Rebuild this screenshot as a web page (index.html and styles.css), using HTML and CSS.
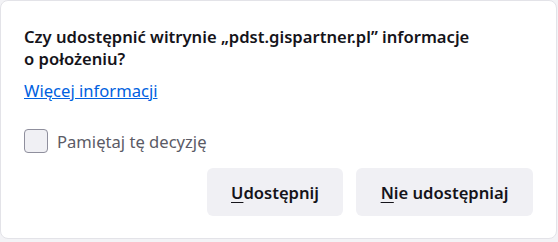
FILE: index.html
```html
<!DOCTYPE html>
<html lang="pl">
<head>
<meta charset="utf-8">
<link rel="stylesheet" href="styles.css">
</head>
<body>
<div class="panel">
  <div class="message">Czy udostępnić witrynie „pdst.gispartner.pl” informacje<br>o położeniu?</div>
  <a class="learn" href="#">Więcej informacji</a>
  <label class="remember"><span class="box"></span><span class="remember-text">Pamiętaj tę decyzję</span></label>
  <div class="actions">
    <button class="btn btn-allow"><u>U</u>dostępnij</button>
    <button class="btn btn-deny"><u>N</u>ie udostępniaj</button>
  </div>
</div>
</body>
</html>
```
FILE: styles.css
```css
html, body {
  margin: 0;
  padding: 0;
}
body {
  width: 558px;
  height: 242px;
  background: #f3f3f6;
  font-family: "Noto Sans", "Open Sans", sans-serif;
  color: #15141a;
  overflow: hidden;
}
.panel {
  box-sizing: border-box;
  width: 557px;
  height: 239px;
  background: #ffffff;
  border: 1px solid #e3e3e8;
  border-radius: 8px;
  padding: 25px 23px 0 23px;
  display: flex;
  flex-direction: column;
}
.message {
  font-size: 16.6px;
  font-weight: 600;
  line-height: 22px;
}
.learn {
  margin-top: 10px;
  font-size: 16.6px;
  line-height: 22px;
  color: #0061e0;
  text-decoration: underline;
  align-self: flex-start;
}
.remember {
  margin-top: 27px;
  display: flex;
  align-items: center;
  gap: 9px;
  height: 24px;
}
.box {
  box-sizing: border-box;
  width: 24px;
  height: 24px;
  border: 1px solid #8f8f9d;
  border-radius: 4px;
  background: #f0f0f4;
}
.remember-text {
  font-size: 16.6px;
  line-height: 22px;
  color: #5b5b66;
  padding-top: 2px;
}
.actions {
  margin-top: 15px;
  display: flex;
  justify-content: flex-end;
  gap: 13px;
}
.btn {
  font-family: inherit;
  font-size: 16.6px;
  font-weight: 600;
  color: #15141a;
  background: #f0f0f4;
  border: none;
  border-radius: 6px;
  height: 48px;
  padding: 0;
}
.btn-allow { width: 136px; }
.btn-deny { width: 177px; }
.btn u { text-underline-offset: 3px; }
```
